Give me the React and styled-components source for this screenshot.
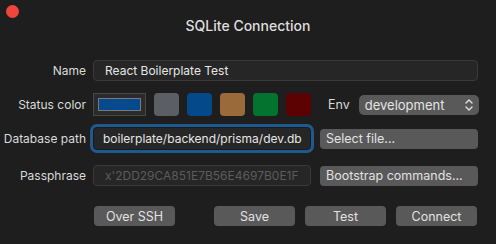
import styled, { createGlobalStyle } from 'styled-components';

const GlobalStyle = createGlobalStyle`
  html, body {
    margin: 0;
    padding: 0;
    background: #1e1e1e;
  }
  * {
    box-sizing: border-box;
  }
`;

const Window = styled.div`
  position: relative;
  width: 496px;
  height: 244px;
  background: #1e1e1e;
  color: #dcdcdc;
  font-family: Inter, 'Noto Sans', sans-serif;
  font-size: 12px;
  overflow: hidden;
`;

const CloseDot = styled.span`
  position: absolute;
  left: 6px;
  top: 5px;
  width: 13px;
  height: 13px;
  border-radius: 50%;
  background: #f0443e;
`;

const Title = styled.h1`
  margin: 16px 0 0;
  height: 20px;
  line-height: 20px;
  text-align: center;
  font-size: 14px;
  font-weight: 500;
  color: #dedede;
`;

const Row = styled.div`
  display: flex;
  align-items: center;
  margin-top: ${({ $top }) => $top}px;
  height: ${({ $h }) => $h}px;
`;

const Label = styled.label`
  width: 86px;
  margin-right: 7px;
  text-align: right;
  white-space: nowrap;
  color: #dadada;
`;

const Field = styled.div`
  width: ${({ $w }) => $w}px;
  height: ${({ $h }) => $h || 21}px;
  display: flex;
  align-items: center;
  padding-left: ${({ $pad }) => $pad || 11}px;
  background: #262626;
  border: 1px solid #3a3a3a;
  border-radius: 4px;
  color: ${({ $placeholder }) => ($placeholder ? '#5c5c5c' : '#e6e6e6')};
  font-size: 12px;
  white-space: nowrap;
  overflow: hidden;
  ${({ $focus }) =>
    $focus &&
    `
    border-color: #1a1a1a;
    box-shadow: 0 0 0 3px #1d5a90;
  `}
`;

const ColorWell = styled.div`
  width: 53px;
  height: 23px;
  padding: 4px;
  background: #2b2b2b;
  border: 1px solid #474747;
  margin-right: 8px;
`;

const WellInner = styled.div`
  width: 100%;
  height: 100%;
  background: #044a8c;
  border: 1px solid #7a7a7a;
`;

const Swatch = styled.div`
  width: 25px;
  height: 23px;
  border-radius: 4px;
  background: ${({ $color }) => $color};
  margin-right: 8px;
`;

const EnvLabel = styled.span`
  margin-left: 9px;
  margin-right: 9px;
  font-size: 12.5px;
  color: #dadada;
`;

const Select = styled.div`
  width: 120px;
  height: 20px;
  border-radius: 5px;
  background: #595959;
  display: flex;
  align-items: center;
  justify-content: space-between;
  padding: 0 6px 0 6px;
  color: #e4e4e4;
  font-size: 13px;
`;

const Button = styled.div`
  width: ${({ $w }) => $w || 81}px;
  height: ${({ $h }) => $h || 20}px;
  margin-left: ${({ $ml }) => $ml || 0}px;
  border-radius: 4px;
  background: #595959;
  display: flex;
  align-items: center;
  justify-content: ${({ $left }) => ($left ? 'flex-start' : 'center')};
  padding: 0 6px;
  color: #e2e2e2;
  font-size: 12.5px;
  white-space: nowrap;
`;

const swatches = ['#5b5e62', '#04498a', '#9b6a3a', '#04732f', '#5c0202'];

const Chevrons = () => (
  <svg width="8" height="14" viewBox="0 0 8 14" fill="none" stroke="#e0e0e0" strokeWidth="1.4" strokeLinecap="round" strokeLinejoin="round">
    <path d="M1 5 L4 2 L7 5" />
    <path d="M1 9 L4 12 L7 9" />
  </svg>
);

export default function App() {
  return (
    <>
      <GlobalStyle />
      <Window>
        <CloseDot />
        <Title>SQLite Connection</Title>

        <Row $top={24} $h={21}>
          <Label>Name</Label>
          <Field $w={385}>React Boilerplate Test</Field>
        </Row>

        <Row $top={12} $h={23}>
          <Label>Status color</Label>
          <ColorWell>
            <WellInner />
          </ColorWell>
          {swatches.map((c) => (
            <Swatch key={c} $color={c} />
          ))}
          <EnvLabel>Env</EnvLabel>
          <Select>
            <span>development</span>
            <Chevrons />
          </Select>
        </Row>

        <Row $top={11} $h={23}>
          <Label>Database path</Label>
          <Field $w={218} $h={23} $pad={9} $focus>boilerplate/backend/prisma/dev.db</Field>
          <Button $w={158} $ml={9} $left>Select file...</Button>
        </Row>

        <Row $top={15} $h={21}>
          <Label>Passphrase</Label>
          <Field $w={218} $placeholder>x'2DD29CA851E7B56E4697B0E1F</Field>
          <Button $w={158} $ml={9} $left>Bootstrap commands...</Button>
        </Row>

        <Row $top={20} $h={20}>
          <Label />
          <Button $ml={1}>Over SSH</Button>
          <Button $ml={39}>Save</Button>
          <Button $ml={10}>Test</Button>
          <Button $ml={10}>Connect</Button>
        </Row>
      </Window>
    </>
  );
}
